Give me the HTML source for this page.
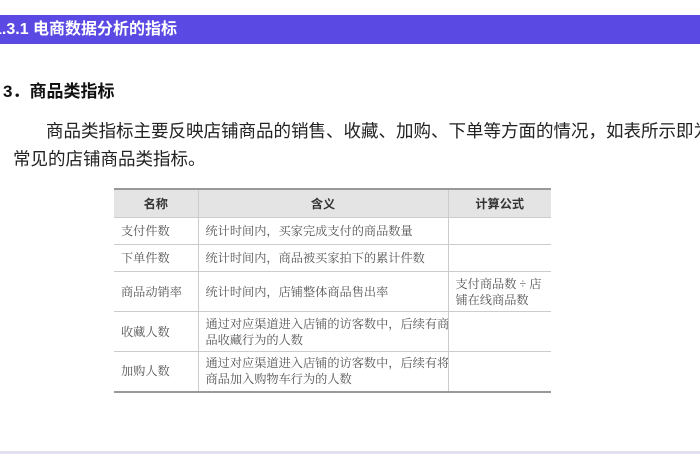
<!DOCTYPE html>
<html><head><meta charset="utf-8"><style>
body{margin:0;width:700px;height:470px;background:#fff;position:relative;overflow:hidden;font-family:"Liberation Sans","Noto Sans CJK SC",sans-serif;}
.bar{position:absolute;left:0;top:15px;width:700px;height:29px;background:#5a4ae3;color:#fff;font-size:16px;font-weight:bold;line-height:29px;}
.bar span{position:absolute;left:-7px;}
.h3{position:absolute;left:3px;top:77px;font-size:17px;font-weight:bold;color:#111;}
.p{position:absolute;font-size:17.5px;color:#222;white-space:nowrap;}
table{position:absolute;left:114px;top:188px;width:437px;border-collapse:collapse;table-layout:fixed;font-family:"Liberation Serif","Noto Serif CJK SC",serif;font-size:12.2px;color:#555;}
td,th{border-right:1px solid #ccc;border-bottom:1px solid #ccc;padding:0 0 0 7px;text-align:left;font-weight:normal;line-height:16px;white-space:nowrap;overflow:hidden;}
td:last-child,th:last-child{border-right:none;}
th{background:#e4e4e4;height:27px;text-align:center;font-family:"Liberation Sans","Noto Sans CJK SC",sans-serif;font-weight:bold;color:#333;padding:0;border-top:2px solid #999;}
tr:last-child td{border-bottom:2px solid #999;}
.line{position:absolute;left:0;top:451px;width:700px;height:3px;background:#e4e0f2;}
</style></head><body>
<div class="bar"><span>1.3.1 电商数据分析的指标</span></div>
<div class="h3">3．商品类指标</div>
<div class="p" style="left:46px;top:118px;">商品类指标主要反映店铺商品的销售、收藏、加购、下单等方面的情况，如表所示即为</div>
<div class="p" style="left:13px;top:146px;">常见的店铺商品类指标。</div>
<table>
<colgroup><col style="width:84px"><col style="width:250px"><col style="width:103px"></colgroup>
<tr><th>名称</th><th>含义</th><th>计算公式</th></tr>
<tr style="height:27px"><td>支付件数</td><td>统计时间内，买家完成支付的商品数量</td><td></td></tr>
<tr style="height:27px"><td>下单件数</td><td>统计时间内，商品被买家拍下的累计件数</td><td></td></tr>
<tr style="height:40px"><td>商品动销率</td><td>统计时间内，店铺整体商品售出率</td><td>支付商品数 ÷ 店<br>铺在线商品数</td></tr>
<tr style="height:40px"><td>收藏人数</td><td>通过对应渠道进入店铺的访客数中，后续有商<br>品收藏行为的人数</td><td></td></tr>
<tr style="height:40px"><td>加购人数</td><td>通过对应渠道进入店铺的访客数中，后续有将<br>商品加入购物车行为的人数</td><td></td></tr>
</table>
<div class="line"></div>
</body></html>
